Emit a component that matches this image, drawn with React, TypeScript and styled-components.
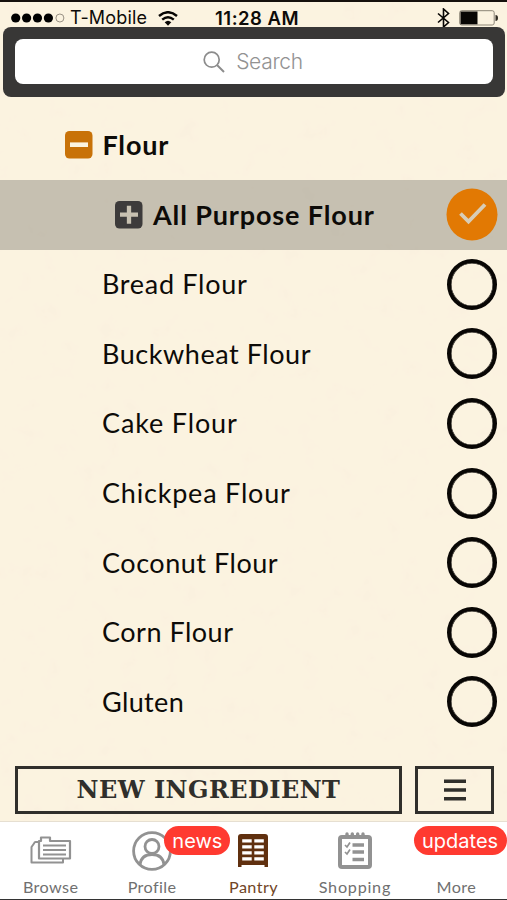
import React from "react";
import styled, { createGlobalStyle } from "styled-components";

const Global = createGlobalStyle`
  *, *::before, *::after { box-sizing: border-box; }
  body { margin: 0; background: #fbf3df; }
  button { font: inherit; color: inherit; background: none; border: 0; padding: 0; margin: 0; }
`;

const paper = encodeURIComponent(
  `<svg xmlns="http://www.w3.org/2000/svg" width="507" height="900"><filter id="p" x="0" y="0" width="100%" height="100%"><feTurbulence type="fractalNoise" baseFrequency="0.05" numOctaves="4" seed="8"/><feColorMatrix values="0 0 0 0 0.94  0 0 0 0 0.82  0 0 0 0 0.72  0.8 0 0 0 -0.45"/></filter><rect width="507" height="900" filter="url(#p)"/></svg>`
);

const Screen = styled.div`
  width: 507px;
  height: 900px;
  display: flex;
  flex-direction: column;
  overflow: hidden;
  border-top: 2px solid #15100c;
  border-bottom: 1px solid #333;
  background: #fbf3e0 url("data:image/svg+xml,${paper}") 0 0 no-repeat;
  font-family: Lato, "Open Sans", sans-serif;
  color: #0d0b08;
`;

const StatusBar = styled.header`
  height: 25px;
  flex: none;
  display: grid;
  grid-template-columns: 215px 86px 1fr;
  grid-template-rows: 18px;
  align-items: center;
  padding-top: 7px;
  font: 18px/18px Inter, sans-serif;
  white-space: nowrap;
`;
const Carrier = styled.div`
  display: flex;
  align-items: center;
  padding-left: 11px;
  & > * { flex: none; }
`;
const Signal = styled.svg` width: 54px; height: 10px; margin-right: 5px; `;
const CarrierName = styled.span` width: 88px; font-size: 18px; letter-spacing: 0.15px; `;
const Clock = styled.time` font-size: 18.5px; font-weight: 600; letter-spacing: 0.5px; `;
const StatusIcons = styled.div`
  display: flex;
  justify-content: flex-end;
  align-items: center;
  gap: 9px;
  padding-right: 9px;
`;

const SearchFrame = styled.div`
  height: 70px;
  flex: none;
  margin: 0 2px 0 3px;
  padding: 12px 12px 13px;
  border-radius: 8px;
  background: #383736;
`;
const SearchField = styled.div`
  height: 45px;
  display: flex;
  align-items: center;
  justify-content: center;
  gap: 11px;
  padding-right: 2px;
  border-radius: 8px;
  background: #fff;
  color: #929292;
  font: 300 21px/24px Inter, sans-serif;
  letter-spacing: -0.3px;
`;

const List = styled.main` flex: 1; padding-top: 13.5px; `;
const Row = styled.div<{ $depth?: number; $selected?: boolean }>`
  height: 69.55px;
  display: flex;
  align-items: center;
  padding: 0 10px 0 ${p => (p.$depth === 0 ? 64.5 : p.$depth === 1 ? 115 : 102)}px;
  background: ${p => (p.$selected ? "rgba(75, 75, 68, 0.3)" : "transparent")};
`;
const Toggle = styled.svg` width: 28px; height: 28px; margin-right: 10px; flex: none; `;
const Name = styled.span<{ $bold?: boolean; $spacing: number }>`
  flex: 1;
  font-size: 27px;
  line-height: 32px;
  font-weight: ${p => (p.$bold ? 700 : 400)};
  letter-spacing: ${p => p.$spacing}px;
  white-space: nowrap;
`;
const Radio = styled.button`
  width: 50px;
  height: 51px;
  border: 4px solid #080604;
  border-radius: 50%;
  box-shadow: inset 0 0 0 0.5px #080604;
`;
const Checked = styled.svg` width: 52px; height: 53px; margin-right: -1px; `;

const Actions = styled.div`
  flex: none;
  display: flex;
  gap: 13px;
  height: 56px;
  padding: 0 12px 8px 15px;
`;
const ActionButton = styled.button<{ $width: number }>`
  width: ${p => p.$width}px;
  height: 48px;
  display: flex;
  align-items: center;
  justify-content: center;
  border: 3px solid #302f2b;
  color: #302f2b;
  font: 700 24px/28px "DejaVu Serif", serif;
  letter-spacing: 0.45px;
  white-space: nowrap;
`;

const TabBar = styled.nav`
  flex: none;
  height: 77px;
  display: grid;
  grid-template-columns: repeat(5, 1fr);
  background: #fff;
  box-shadow: 0 -1px 0 #e6dfd1;
`;
const Tab = styled.button<{ $active?: boolean }>`
  position: relative;
  display: grid;
  grid-template-rows: 57px 16px;
  align-content: start;
  justify-items: center;
  align-items: center;
  color: ${p => (p.$active ? "#60300f" : "#929292")};
`;
const TabLabel = styled.span<{ $active?: boolean; $spacing?: number }>`
  font-size: 16.2px;
  line-height: 16px;
  color: ${p => (p.$active ? "#704526" : "#707070")};
  letter-spacing: ${p => p.$spacing ?? 0.4}px;
`;
const Badge = styled.span<{ $left: number; $width: number }>`
  position: absolute;
  z-index: 1;
  top: 4px;
  left: ${p => p.$left}px;
  width: ${p => p.$width}px;
  height: 29px;
  border-radius: 15px;
  background: #ff3a30;
  color: #fff;
  font: 20px/30px Inter, sans-serif;
  text-align: center;
`;

const items: [string, number][] = [
  ["Bread Flour", 0.7],
  ["Buckwheat Flour", 0.55],
  ["Cake Flour", 0.85],
  ["Chickpea Flour", 0.8],
  ["Coconut Flour", 0.53],
  ["Corn Flour", 0.5],
  ["Gluten", 0.35],
];

const BrowseIcon = () => (
  <svg width="42" height="30" viewBox="0 0 42 30" fill="none" stroke="currentColor" strokeWidth="2" strokeLinejoin="round">
    <path d="M9 6H5.5Q4.5 6 4 7.5L1.5 11V26.5H33V23" />
    <path d="M9 22V5H11V1.5H20V5H40V22.5H9Z" strokeWidth="2.2" />
    <path d="M13 9.5H36M13 14H36M13 18.5H36" strokeWidth="1.8" />
  </svg>
);
const ProfileIcon = () => (
  <svg width="40" height="40" viewBox="0 0 40 40" fill="none" stroke="currentColor" strokeWidth="2.8">
    <circle cx="20" cy="20" r="18.4" />
    <circle cx="20" cy="15.5" r="7" />
    <path d="M8 33.5C9 26 14 23.5 20 23.5S31 26 32 33.5" />
  </svg>
);
const PantryIcon = () => (
  <svg width="32" height="34" viewBox="0 0 32 34">
    <path fill="currentColor" d="M4 0H28Q31 0 31 3V33H27.5V31H4.5V33H1V3Q1 0 4 0Z" />
    <path stroke="#fff" strokeWidth="3.3" d="M5.2 6.8H14.7M17.3 6.8H26.8M5.2 12.8H14.7M17.3 12.8H26.8M5.2 18.8H14.7M17.3 18.8H26.8M5.2 24.8H14.7M17.3 24.8H26.8" />
  </svg>
);
const ShoppingIcon = () => (
  <svg width="34" height="37" viewBox="0 0 34 37" fill="none" stroke="currentColor">
    <rect x="2" y="5" width="30" height="30" rx="2" strokeWidth="4" />
    <path d="M9 2V5M14.3 2V5M19.7 2V5M25 2V5" strokeWidth="3.4" strokeLinecap="round" />
    <path d="M14.5 13H26M14.5 20H26M14.5 27.5H26" strokeWidth="3.5" />
    <path d="M7 13L9 15L12 10.5M7 20L9 22L12 17.5" strokeWidth="1.7" />
  </svg>
);

export default function App() {
  return (
    <Screen>
      <Global />
      <StatusBar>
        <Carrier>
          <Signal viewBox="0 0 54 10">
            {[4.7, 15.6, 26.5, 37.4].map(x => <circle key={x} cx={x} cy="5" r="4.6" />)}
            <circle cx="48.9" cy="5" r="4" fill="none" stroke="#999184" />
          </Signal>
          <CarrierName>T-Mobile</CarrierName>
          <svg width="20" height="15" viewBox="0 0 20 15" fill="none" stroke="#080604" strokeWidth="2.4">
            <path d="M1 5Q10 -2.6 19 5M4.2 8.7Q10 3.6 15.8 8.7" />
            <path d="M6.7 11.2Q10 8.2 13.3 11.2L10 14.7Z" fill="#080604" stroke="none" />
          </svg>
        </Carrier>
        <Clock>11:28 AM</Clock>
        <StatusIcons>
          <svg width="13" height="20" viewBox="0 0 13 20" fill="none" stroke="#080604" strokeWidth="1.6">
            <path d="M1 5.5L11.5 14.5L6.5 19V1L11.5 5.5L1 14.5" />
          </svg>
          <svg width="39" height="16" viewBox="0 0 39 16">
            <rect x=".7" y=".7" width="34.5" height="14.3" rx="2" fill="none" stroke="#8c8577" />
            <path d="M1.5 1.5H18.5V14.3H1.5Z" fill="#080604" />
            <path d="M36.5 5Q39 5 39 8T36.5 11Z" fill="#302c24" />
          </svg>
        </StatusIcons>
      </StatusBar>
      <SearchFrame>
        <SearchField>
          <svg width="22" height="22" viewBox="0 0 22 22" fill="none" stroke="#8c8c8c" strokeWidth="1.7">
            <circle cx="8.7" cy="8.7" r="7.5" /><path d="M14 14L21 21" strokeWidth="2" />
          </svg>
          <span>Search</span>
        </SearchField>
      </SearchFrame>
      <List>
        <Row $depth={0}>
          <Toggle viewBox="0 0 28 28">
            <rect width="27.5" height="27.5" rx="4.5" fill="#c87208" />
            <path d="M5 13.7H23" stroke="#fcf4e0" strokeWidth="4.6" />
          </Toggle>
          <Name $bold $spacing={0.8}>Flour</Name>
        </Row>
        <Row $depth={1} $selected>
          <Toggle viewBox="0 0 28 28">
            <rect width="27.5" height="27.5" rx="4.5" fill="#3d3b3b" />
            <path d="M5 13.7H23M14 4.7V22.7" stroke="#c8c1b1" strokeWidth="4.3" />
          </Toggle>
          <Name $bold $spacing={0.87}>All Purpose Flour</Name>
          <Checked viewBox="0 0 52 53">
            <ellipse cx="26" cy="26.5" rx="25.5" ry="26" fill="#e27903" />
            <path d="M14.5 25.5L22.5 33.5L39 16.5" fill="none" stroke="#d8cdb7" strokeWidth="3.8" />
          </Checked>
        </Row>
        {items.map(([name, spacing]) => (
          <Row key={name}>
            <Name $spacing={spacing}>{name}</Name>
            <Radio aria-label={name} />
          </Row>
        ))}
      </List>
      <Actions>
        <ActionButton $width={387}>NEW INGREDIENT</ActionButton>
        <ActionButton $width={79} aria-label="Menu">
          <svg width="24" height="24" viewBox="0 0 24 24" stroke="currentColor" strokeWidth="3.6">
            <path d="M1 3.3H23M1 12H23M1 20.7H23" />
          </svg>
        </ActionButton>
      </Actions>
      <TabBar>
        <Tab><BrowseIcon /><TabLabel>Browse</TabLabel></Tab>
        <Tab><ProfileIcon /><Badge $left={63} $width={66}>news</Badge><TabLabel>Profile</TabLabel></Tab>
        <Tab $active><PantryIcon /><TabLabel $active>Pantry</TabLabel></Tab>
        <Tab><ShoppingIcon /><TabLabel $spacing={0.75}>Shopping</TabLabel></Tab>
        <Tab><span /><Badge $left={8} $width={93}>updates</Badge><TabLabel>More</TabLabel></Tab>
      </TabBar>
    </Screen>
  );
}
